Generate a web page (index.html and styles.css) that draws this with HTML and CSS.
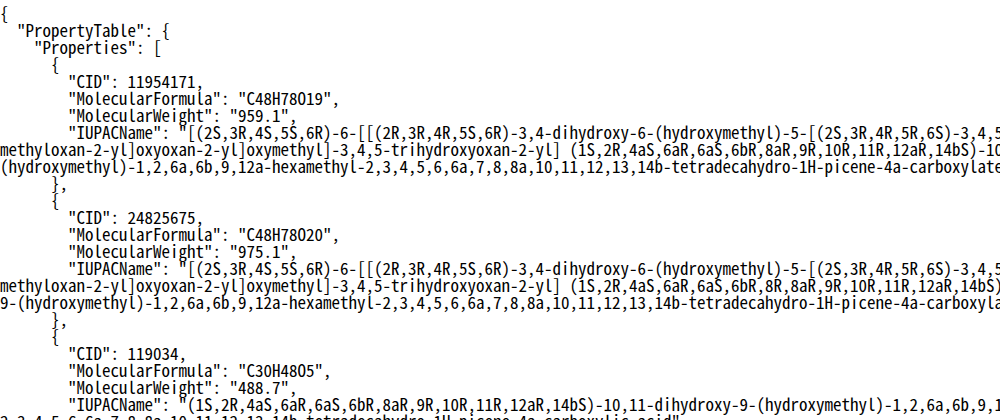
FILE: index.html
```html
<!DOCTYPE html>
<html lang="en">
<head>
<meta charset="utf-8">
<title>PropertyTable JSON</title>
<link rel="stylesheet" href="styles.css">
</head>
<body>
<div class="viewer">
<pre class="json">{
  "PropertyTable": {
    "Properties": [
      {
        "CID": 11954171,
        "MolecularFormula": "C48H78O19",
        "MolecularWeight": "959.1",
        "IUPACName": "[(2S,3R,4S,5S,6R)-6-[[(2R,3R,4R,5S,6R)-3,4-dihydroxy-6-(hydroxymethyl)-5-[(2S,3R,4R,5R,6S)-3,4,5-trihydroxy-6-
methyloxan-2-yl]oxyoxan-2-yl]oxymethyl]-3,4,5-trihydroxyoxan-2-yl] (1S,2R,4aS,6aR,6aS,6bR,8aR,9R,10R,11R,12aR,14bS)-10,11-dihydroxy-9-
(hydroxymethyl)-1,2,6a,6b,9,12a-hexamethyl-2,3,4,5,6,6a,7,8,8a,10,11,12,13,14b-tetradecahydro-1H-picene-4a-carboxylate"
      },
      {
        "CID": 24825675,
        "MolecularFormula": "C48H78O20",
        "MolecularWeight": "975.1",
        "IUPACName": "[(2S,3R,4S,5S,6R)-6-[[(2R,3R,4R,5S,6R)-3,4-dihydroxy-6-(hydroxymethyl)-5-[(2S,3R,4R,5R,6S)-3,4,5-trihydroxy-6-
methyloxan-2-yl]oxyoxan-2-yl]oxymethyl]-3,4,5-trihydroxyoxan-2-yl] (1S,2R,4aS,6aR,6aS,6bR,8R,8aR,9R,10R,11R,12aR,14bS)-8,10,11-trihydroxy-
9-(hydroxymethyl)-1,2,6a,6b,9,12a-hexamethyl-2,3,4,5,6,6a,7,8,8a,10,11,12,13,14b-tetradecahydro-1H-picene-4a-carboxylate"
      },
      {
        "CID": 119034,
        "MolecularFormula": "C30H48O5",
        "MolecularWeight": "488.7",
        "IUPACName": "(1S,2R,4aS,6aR,6aS,6bR,8aR,9R,10R,11R,12aR,14bS)-10,11-dihydroxy-9-(hydroxymethyl)-1,2,6a,6b,9,12a-hexamethyl-
2,3,4,5,6,6a,7,8,8a,10,11,12,13,14b-tetradecahydro-1H-picene-4a-carboxylic acid"
      }
    ]
  }
}</pre>
</div>
</body>
</html>
```
FILE: styles.css
```css
html, body {
  margin: 0;
  padding: 0;
  background: #ffffff;
}

.viewer {
  width: 1000px;
  height: 420px;
  overflow: hidden;
}

.json {
  margin: 0;
  padding: 4px 0 0 0;
  font-family: "Noto Sans Mono CJK JP", "Liberation Mono", monospace;
  font-size: 17px;
  line-height: 17px;
  color: #000000;
  white-space: pre;
}
```
